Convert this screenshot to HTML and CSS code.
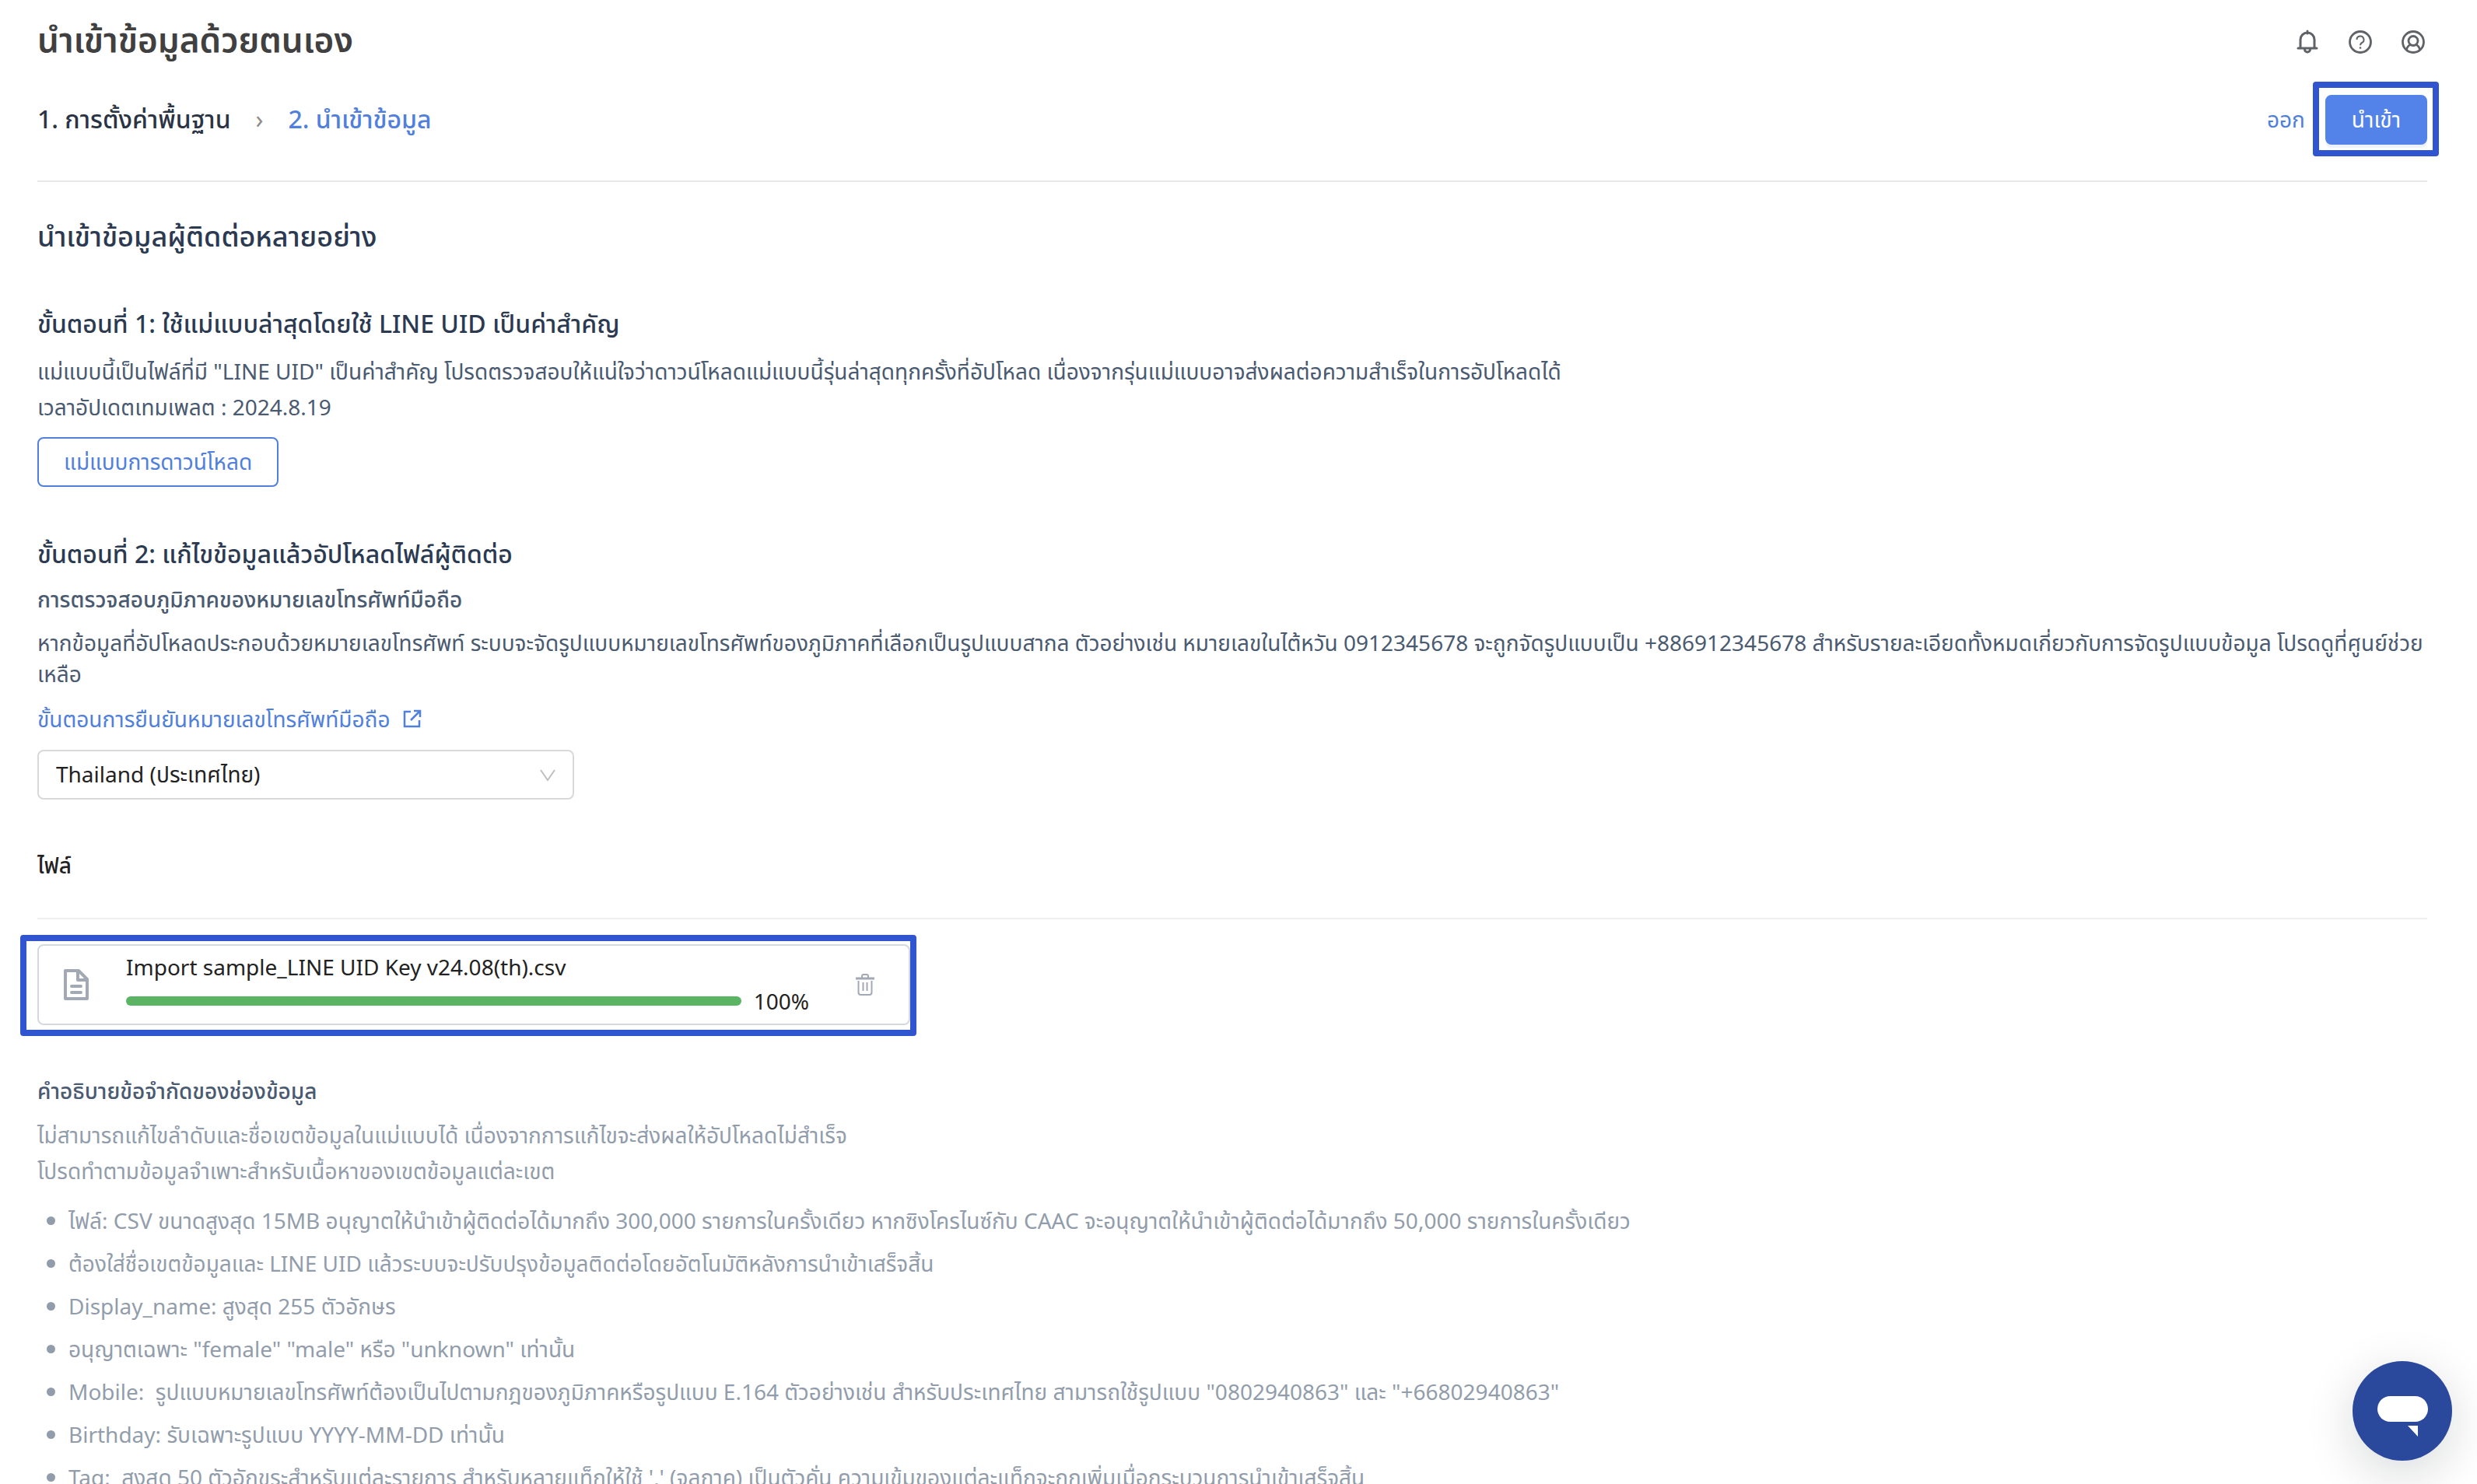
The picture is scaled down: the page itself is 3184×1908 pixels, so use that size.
FILE: index.html
```html
<!DOCTYPE html>
<html lang="th">
<head>
    <meta charset="UTF-8">
    <meta name="viewport" content="width=device-width, initial-scale=1.0">
    <title>นำเข้าข้อมูลด้วยตนเอง</title>
    <link rel="stylesheet" href="styles.css">
</head>
<body>
    <header class="header">
        <h1>นำเข้าข้อมูลด้วยตนเอง</h1>
        <div class="header-icons">
            <button type="button" class="icon-btn" aria-label="การแจ้งเตือน">
                <svg viewBox="0 0 32 32" fill="none" stroke="currentColor" stroke-width="3" stroke-linecap="round">
                    <path d="M16 2v3M7 24V13a9 9 0 0 1 18 0v11M4 24h24M12.500 25.500a3.500 3.500 0 0 0 7 0"/>
                </svg>
            </button>
            <button type="button" class="icon-btn" aria-label="ช่วยเหลือ">
                <svg viewBox="0 0 32 32" fill="none" stroke="currentColor">
                    <circle cx="16" cy="16" r="13.500" stroke-width="2.800"/>
                    <path d="M11.500 13a4.500 4.500 0 1 1 6.500 4c-1.500.8-2 1.500-2 3.200" stroke-width="2"/>
                    <circle cx="16" cy="23.500" r="1.300" fill="currentColor" stroke="none"/>
                </svg>
            </button>
            <button type="button" class="icon-btn" aria-label="บัญชี">
                <svg viewBox="0 0 32 32" fill="none" stroke="currentColor" stroke-width="2.800">
                    <circle cx="16" cy="16" r="13.500"/>
                    <circle cx="16" cy="14.500" r="6"/>
                    <path d="M7.500 26c.5-3.500 2.500-5.500 5-6.500M24.500 26c-.5-3.500-2.500-5.500-5-6.500"/>
                </svg>
            </button>
        </div>
    </header>

    <div class="step-bar">
        <nav class="steps">
            <a href="#basic" class="step">1. การตั้งค่าพื้นฐาน</a>
            <span class="step-arrow">›</span>
            <a href="#import" class="step active">2. นำเข้าข้อมูล</a>
        </nav>
        <div class="step-actions">
            <a href="#exit" class="exit-link">ออก</a>
            <div class="highlight highlight-btn">
                <button type="submit" form="importForm" class="btn btn-primary">นำเข้า</button>
            </div>
        </div>
    </div>

    <main>
        <form id="importForm">
            <h2>นำเข้าข้อมูลผู้ติดต่อหลายอย่าง</h2>

            <section class="step-one">
                <h3>ขั้นตอนที่ 1: ใช้แม่แบบล่าสุดโดยใช้ LINE UID เป็นค่าสำคัญ</h3>
                <p class="text">แม่แบบนี้เป็นไฟล์ที่มี "LINE UID" เป็นค่าสำคัญ โปรดตรวจสอบให้แน่ใจว่าดาวน์โหลดแม่แบบนี้รุ่นล่าสุดทุกครั้งที่อัปโหลด เนื่องจากรุ่นแม่แบบอาจส่งผลต่อความสำเร็จในการอัปโหลดได้</p>
                <p class="text">เวลาอัปเดตเทมเพลต : 2024.8.19</p>
                <button type="button" class="btn btn-outline">แม่แบบการดาวน์โหลด</button>
            </section>

            <section class="step-two">
                <h3>ขั้นตอนที่ 2: แก้ไขข้อมูลแล้วอัปโหลดไฟล์ผู้ติดต่อ</h3>
                <label for="region" class="region-label">การตรวจสอบภูมิภาคของหมายเลขโทรศัพท์มือถือ</label>
                <p class="region-note">หากข้อมูลที่อัปโหลดประกอบด้วยหมายเลขโทรศัพท์ ระบบจะจัดรูปแบบหมายเลขโทรศัพท์ของภูมิภาคที่เลือกเป็นรูปแบบสากล ตัวอย่างเช่น หมายเลขในไต้หวัน 0912345678 จะถูกจัดรูปแบบเป็น +886912345678 สำหรับรายละเอียดทั้งหมดเกี่ยวกับการจัดรูปแบบข้อมูล โปรดดูที่ศูนย์ช่วยเหลือ</p>
                <a href="#verify" class="help-link">
                    ขั้นตอนการยืนยันหมายเลขโทรศัพท์มือถือ
                    <svg viewBox="0 0 24 24" fill="none" stroke="currentColor" stroke-width="2.500">
                        <path d="M10 3H2v19h19v-8M14 2h8v8M22 2 10 14"/>
                    </svg>
                </a>
                <div class="select-box">
                    <select id="region">
                        <option>Thailand (ประเทศไทย)</option>
                    </select>
                    <svg viewBox="0 0 20 16" fill="none" stroke="currentColor" stroke-width="2">
                        <path d="M1 1l9 13 9-13"/>
                    </svg>
                </div>
            </section>

            <h4 class="file-title">ไฟล์</h4>

            <div class="highlight highlight-file">
                <div class="file-card">
                    <svg class="file-icon" viewBox="0 0 32 40" fill="none" stroke="currentColor" stroke-width="4" stroke-linejoin="round">
                        <path d="M2 2h17l11 11v25H2z"/>
                        <path d="M18 2v12h12"/>
                        <path d="M10 22h12M10 30h12" stroke-linecap="round"/>
                    </svg>
                    <div class="file-info">
                        <div class="file-name">Import sample_LINE UID Key v24.08(th).csv</div>
                        <div class="progress">
                            <div class="progress-track">
                                <div class="progress-bar" style="width: 100%"></div>
                            </div>
                            <span>100%</span>
                        </div>
                    </div>
                    <button type="button" class="trash-btn" aria-label="ลบไฟล์">
                        <svg viewBox="0 0 24 28" fill="none" stroke="currentColor" stroke-width="2">
                            <path d="M0 6h24" stroke-width="3"/>
                            <path d="M8 5V3q0-2 2-2h4q2 0 2 2v2"/>
                            <path d="M3.500 9v15q0 3 3 3h11q3 0 3-3V9"/>
                            <path d="M9.500 11v11M14.500 11v11"/>
                        </svg>
                    </button>
                </div>
            </div>

            <section class="limits">
                <h4>คำอธิบายข้อจำกัดของช่องข้อมูล</h4>
                <p>ไม่สามารถแก้ไขลำดับและชื่อเขตข้อมูลในแม่แบบได้ เนื่องจากการแก้ไขจะส่งผลให้อัปโหลดไม่สำเร็จ</p>
                <p>โปรดทำตามข้อมูลจำเพาะสำหรับเนื้อหาของเขตข้อมูลแต่ละเขต</p>
                <ul>
                    <li>ไฟล์: CSV ขนาดสูงสุด 15MB อนุญาตให้นำเข้าผู้ติดต่อได้มากถึง 300,000 รายการในครั้งเดียว หากซิงโครไนซ์กับ CAAC จะอนุญาตให้นำเข้าผู้ติดต่อได้มากถึง 50,000 รายการในครั้งเดียว</li>
                    <li>ต้องใส่ชื่อเขตข้อมูลและ LINE UID แล้วระบบจะปรับปรุงข้อมูลติดต่อโดยอัตโนมัติหลังการนำเข้าเสร็จสิ้น</li>
                    <li>Display_name: สูงสุด 255 ตัวอักษร</li>
                    <li>อนุญาตเฉพาะ "female" "male" หรือ "unknown" เท่านั้น</li>
                    <li>Mobile: &nbsp;รูปแบบหมายเลขโทรศัพท์ต้องเป็นไปตามกฎของภูมิภาคหรือรูปแบบ E.164 ตัวอย่างเช่น สำหรับประเทศไทย สามารถใช้รูปแบบ "0802940863" และ "+66802940863"</li>
                    <li>Birthday: รับเฉพาะรูปแบบ YYYY-MM-DD เท่านั้น</li>
                    <li>Tag: &nbsp;สูงสุด 50 ตัวอักขระสำหรับแต่ละรายการ สำหรับหลายแท็กให้ใช้ ',' (จุลภาค) เป็นตัวคั่น ความเข้มของแต่ละแท็กจะถูกเพิ่มเมื่อกระบวนการนำเข้าเสร็จสิ้น</li>
                </ul>
            </section>
        </form>
    </main>

    <button type="button" class="chat-btn" aria-label="แชท">
        <svg viewBox="0 0 128 128" fill="#fff">
            <rect x="32" y="45" width="65" height="33" rx="16.500"/>
            <path d="M71 83h13v14z"/>
        </svg>
    </button>
</body>
</html>
```

FILE: styles.css
```css
:root {
    --primary-color: #5383e8;
    --link-color: #5080dc;
    --highlight-color: #3155d0;
    --heading-color: #2b3a51;
    --text-color: #4a5a70;
    --muted-color: #929dab;
    --success-color: #5ab464;
}

* {
    margin: 0;
    padding: 0;
    box-sizing: border-box;
}

body {
    font-family: "Noto Sans", "Noto Sans Thai", sans-serif;
    font-size: 28px;
    line-height: 44px;
    background-color: #fff;
    color: #222;
    height: 100vh;
    padding: 0 64px 0 48px;
    overflow: hidden;
}

h2, h3, h4 {
    color: var(--heading-color);
    font-weight: 500;
}

a {
    color: var(--link-color);
    text-decoration: none;
}

button, select {
    font: inherit;
    cursor: pointer;
}

.header {
    display: flex;
    justify-content: space-between;
    height: 104px;
    padding-top: 18px;
}

.header h1 {
    font-size: 44px;
    line-height: 64px;
    font-weight: 600;
    color: #404040;
}

.header-icons {
    display: flex;
    gap: 36px;
    padding: 20px 2px 0 0;
}

.icon-btn {
    width: 32px;
    height: 32px;
    border: none;
    background: none;
    color: #5f6266;
}

.icon-btn svg {
    display: block;
}

.step-bar {
    display: flex;
    justify-content: space-between;
    align-items: center;
    height: 130px;
    padding-bottom: 30px;
    border-bottom: 2px solid #e8e8e8;
}

.steps {
    display: flex;
    align-items: center;
    gap: 32px;
    font-size: 32px;
    font-weight: 500;
}

.step {
    color: #2b3444;
}

.step.active {
    color: var(--link-color);
}

.step-arrow {
    color: #8c8c8c;
    font-weight: 400;
}

.step-actions {
    display: flex;
    align-items: center;
    gap: 10px;
}

/* frame drawn round the part the user should look at */
.highlight {
    border: 8px solid var(--highlight-color);
    border-radius: 4px;
}

.highlight-btn {
    padding: 9px 7px 7px 8px;
    margin-right: -15px;
}

.btn {
    display: block;
    height: 64px;
    padding: 0 32px 2px;
    border: 2px solid var(--link-color);
    border-radius: 8px;
}

.btn-primary {
    border-color: var(--primary-color);
    background-color: var(--primary-color);
    color: #fff;
    box-shadow: 0 4px 0 rgba(83, 131, 232, 0.1);
}

.btn-outline {
    background-color: #fff;
    color: var(--link-color);
    margin-top: 16px;
}

h2 {
    font-size: 36px;
    line-height: 56px;
    margin-top: 42px;
}

h3 {
    font-size: 32px;
    line-height: 48px;
}

.step-one {
    margin-top: 60px;
}

.step-one h3 {
    margin-bottom: 14px;
}

.text {
    color: var(--text-color);
    line-height: 46px;
}

.step-two {
    margin-top: 62px;
}

.region-label {
    display: block;
    color: var(--text-color);
    font-weight: 500;
    margin-top: 12px;
}

.region-note {
    color: var(--text-color);
    line-height: 40px;
    margin-top: 14px;
}

.help-link {
    display: flex;
    align-items: center;
    gap: 16px;
    margin-top: 16px;
}

.help-link svg {
    width: 24px;
    height: 24px;
}

.select-box {
    position: relative;
    width: 690px;
    margin-top: 18px;
}

.select-box select {
    width: 100%;
    height: 64px;
    padding: 0 22px 2px;
    border: 2px solid #d9d9d9;
    border-radius: 8px;
    background-color: #fff;
    color: #222;
    appearance: none;
}

.select-box svg {
    position: absolute;
    right: 24px;
    top: 25px;
    width: 20px;
    height: 16px;
    color: #bfbfbf;
    pointer-events: none;
}

.file-title {
    color: #222;
    margin-top: 62px;
    padding-bottom: 46px;
    border-bottom: 2px solid #f0f0f0;
}

.highlight-file {
    width: 1152px;
    margin: 20px 0 0 -22px;
    padding: 4px 0 6px 14px;
}

.file-card {
    display: flex;
    align-items: center;
    height: 104px;
    padding: 0 44px 0 32px;
    border: 2px solid #d5d8dd;
    border-radius: 8px;
}

.file-icon {
    width: 32px;
    height: 40px;
    color: #a3a9b4;
}

.file-info {
    flex: 1;
    margin: 0 60px 2px 48px;
}

.file-name {
    line-height: 44px;
}

.progress {
    display: flex;
    align-items: center;
    gap: 16px;
}

.progress-track {
    flex: 1;
    height: 12px;
    border-radius: 6px;
    background-color: #f5f5f5;
}

.progress-bar {
    height: 12px;
    border-radius: 6px;
    background-color: var(--success-color);
}

.trash-btn {
    width: 24px;
    height: 28px;
    border: none;
    background: none;
    color: #a3a9b4;
}

.trash-btn svg {
    display: block;
}

.limits {
    margin-top: 48px;
    color: var(--muted-color);
}

.limits h4 {
    color: var(--text-color);
    margin-bottom: 12px;
}

.limits p {
    line-height: 46px;
}

.limits ul {
    list-style: none;
    margin-top: 14px;
}

.limits li {
    display: flex;
    align-items: center;
    gap: 17px;
    line-height: 55px;
    padding-left: 12px;
    white-space: pre-wrap;
}

.limits li::before {
    content: "";
    width: 11px;
    height: 11px;
    border-radius: 50%;
    background-color: var(--muted-color);
}

.chat-btn {
    position: fixed;
    right: 32px;
    bottom: 30px;
    width: 128px;
    height: 128px;
    border: none;
    border-radius: 50%;
    background-color: #2a489c;
    box-shadow: 0 16px 64px rgba(0, 18, 26, 0.16);
}

.chat-btn svg {
    display: block;
}
```
